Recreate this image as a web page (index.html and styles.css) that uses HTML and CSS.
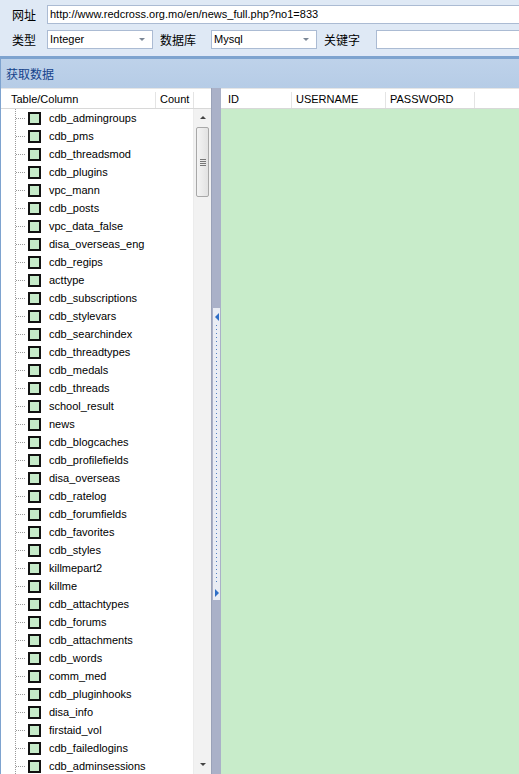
FILE: index.html
```html
<!DOCTYPE html>
<html>
<head>
<meta charset="utf-8">
<link rel="stylesheet" href="styles.css">
</head>
<body>
<div class="app">
  <div class="form">
    <div class="row">
      <span class="label">网址</span>
      <div class="input url">http://www.redcross.org.mo/en/news_full.php?no1=833</div>
    </div>
    <div class="row">
      <span class="label">类型</span>
      <div class="input combo w106">Integer<span class="arrow"></span></div>
      <span class="label l2">数据库</span>
      <div class="input combo w106">Mysql<span class="arrow"></span></div>
      <span class="label l3">关键字</span>
      <div class="input grow"></div>
    </div>
  </div>
  <div class="toolbar"><span class="tbtn">获取数据</span></div>
  <div class="main">
    <div class="left">
      <div class="lhead">
        <div class="hcol c1">Table/Column</div>
        <div class="hcol c2">Count</div>
        <div class="hcol c3"></div>
      </div>
      <div class="lbody">
        <ul class="tree" id="tree"></ul>
        <div class="vscroll">
          <div class="sbtn up"></div>
          <div class="thumb"><span class="grip"></span></div>
          <div class="track"></div>
          <div class="sbtn down"></div>
        </div>
      </div>
    </div>
    <div class="splitter">
      <div class="collapse">
        <span class="tri left-tri"></span>
        <span class="dots"></span>
        <span class="tri right-tri"></span>
      </div>
    </div>
    <div class="right">
      <div class="rhead">
        <div class="rcol r1">ID</div>
        <div class="rcol r2">USERNAME</div>
        <div class="rcol r3">PASSWORD</div>
        <div class="rcol r4"></div>
      </div>
      <div class="grid"></div>
    </div>
  </div>
</div>
<script>
var names = ["cdb_admingroups","cdb_pms","cdb_threadsmod","cdb_plugins","vpc_mann","cdb_posts","vpc_data_false","disa_overseas_eng","cdb_regips","acttype","cdb_subscriptions","cdb_stylevars","cdb_searchindex","cdb_threadtypes","cdb_medals","cdb_threads","school_result","news","cdb_blogcaches","cdb_profilefields","disa_overseas","cdb_ratelog","cdb_forumfields","cdb_favorites","cdb_styles","killmepart2","killme","cdb_attachtypes","cdb_forums","cdb_attachments","cdb_words","comm_med","cdb_pluginhooks","disa_info","firstaid_vol","cdb_failedlogins","cdb_adminsessions"];
var t = document.getElementById('tree');
names.forEach(function(n){
  var li = document.createElement('li');
  li.className = 'node';
  li.innerHTML = '<span class="hline"></span><span class="cb"></span><span class="name">' + n + '</span>';
  t.appendChild(li);
});
</script>
</body>
</html>
```
FILE: styles.css
```css
html, body {
  margin: 0;
  padding: 0;
  width: 519px;
  height: 774px;
  overflow: hidden;
}
body {
  font-family: "Liberation Sans", "DejaVu Sans", "Noto Sans CJK SC", sans-serif;
  font-size: 11px;
  color: #000;
  background: #dfe8f6;
}
.app {
  display: flex;
  flex-direction: column;
  height: 774px;
}
.form {
  background: #dfe9f5;
  padding: 5px 0 0 0;
  height: 52px;
  box-sizing: border-box;
  display: flex;
  flex-direction: column;
  gap: 6px;
}
.row {
  display: flex;
  align-items: center;
  height: 19px;
}
.label {
  font-family: "Noto Sans CJK SC", sans-serif;
  font-size: 12px;
  width: 35px;
  padding-left: 12px;
  box-sizing: content-box;
  line-height: 19px;
}
.label.l2 { width: 51px; padding-left: 7px; }
.label.l3 { width: 52px; padding-left: 7px; }
.input {
  height: 19px;
  box-sizing: border-box;
  background: #fff;
  border: 1px solid #abbbd3;
  line-height: 17px;
  padding-left: 2px;
  position: relative;
}
.input.url { flex: 1; border-right: none; }
.input.w106 { width: 106px; }
.input.grow { flex: 1; border-right: none; }
.arrow {
  position: absolute;
  right: 7px;
  top: 7px;
  width: 0;
  height: 0;
  border-left: 3px solid transparent;
  border-right: 3px solid transparent;
  border-top: 3px solid #7c8796;
}
.toolbar {
  margin-top: 4px;
  height: 32px;
  box-sizing: border-box;
  border-top: 3px solid #7ea3cf;
  background: linear-gradient(#bed2ea, #b6cce6);
  border-left: 1px solid #7ea3cf;
  display: flex;
  align-items: center;
}
.tbtn {
  font-family: "Noto Sans CJK SC", sans-serif;
  font-size: 12px;
  color: #15428b;
  padding-left: 5px;
}
.main {
  flex: 1;
  display: flex;
  min-height: 0;
  background: #c8ccd8;
}
.left {
  width: 212px;
  box-sizing: border-box;
  border-left: 1px solid #7ea3cf;
  border-right: 1px solid #9aa2b8;
  background: #fff;
  display: flex;
  flex-direction: column;
}
.lhead {
  height: 21px;
  box-sizing: border-box;
  display: flex;
  border-top: 1px solid #e6e6e6;
  border-bottom: 1px solid #d8d8d8;
  background: #fff;
  padding-top: 3px;
}
.hcol {
  line-height: 15px;
  border-right: 1px solid #e4e4e4;
  box-sizing: border-box;
}
.c1 { width: 155px; padding-left: 10px; }
.c2 { width: 38px; padding-left: 4px; }
.c3 { flex: 1; border-right: none; }
.lbody {
  flex: 1;
  display: flex;
  min-height: 0;
  background: #fff;
}
.tree {
  list-style: none;
  margin: 0;
  padding: 0;
  flex: 1;
  position: relative;
  overflow: hidden;
  background-image: linear-gradient(#9a9a9a 1px, transparent 1px);
  background-size: 1px 2px;
  background-repeat: repeat-y;
  background-position: 14px 0;
}
.node {
  height: 18px;
  display: flex;
  align-items: center;
  white-space: nowrap;
}
.hline {
  width: 10px;
  margin-left: 15px;
  height: 1px;
  background-image: linear-gradient(90deg, #9a9a9a 1px, transparent 1px);
  background-size: 2px 1px;
}
.cb {
  width: 13px;
  height: 13px;
  box-sizing: border-box;
  border: 2px solid #111;
  background: #c6ebc9;
  margin-left: 2px;
}
.name {
  margin-left: 8px;
  line-height: 18px;
}
.vscroll {
  width: 17px;
  background: #f2f2f2;
  border-left: 1px solid #ececec;
  display: flex;
  flex-direction: column;
  align-items: center;
}
.sbtn {
  height: 18px;
  width: 16px;
  position: relative;
}
.sbtn::after {
  content: "";
  position: absolute;
  left: 5px;
  width: 0;
  height: 0;
  border-left: 3px solid transparent;
  border-right: 3px solid transparent;
}
.sbtn.up::after { top: 7px; border-bottom: 3px solid #444; }
.sbtn.down::after { top: 7px; border-top: 3px solid #444; }
.thumb {
  width: 13px;
  height: 70px;
  box-sizing: border-box;
  border: 1px solid #a8a8a8;
  border-radius: 2px;
  background: linear-gradient(90deg, #f4f4f4, #e2e2e2);
  display: flex;
  align-items: center;
  justify-content: center;
}
.grip {
  width: 6px;
  height: 7px;
  background-image: linear-gradient(#777 1px, transparent 1px);
  background-size: 6px 2px;
}
.track { flex: 1; }
.splitter {
  width: 9px;
  background: #aab1c8;
  display: flex;
  flex-direction: column;
  align-items: center;
  padding-top: 220px;
}
.collapse {
  width: 7px;
  height: 292px;
  background: #eaedf4;
  display: flex;
  flex-direction: column;
  align-items: center;
  padding: 5px 0 3px;
  box-sizing: border-box;
}
.tri {
  width: 0;
  height: 0;
  border-top: 4px solid transparent;
  border-bottom: 4px solid transparent;
}
.left-tri { border-right: 4px solid #2f6fc6; }
.right-tri { border-left: 4px solid #2f6fc6; }
.dots {
  flex: 1;
  width: 1px;
  margin: 4px 0;
  background-image: linear-gradient(#4f7fc2 1px, transparent 1px);
  background-size: 1px 4px;
}
.right {
  flex: 1;
  display: flex;
  flex-direction: column;
  background: #c8ecca;
}
.rhead {
  height: 21px;
  box-sizing: border-box;
  display: flex;
  background: #fff;
  border-top: 1px solid #e6e6e6;
  border-bottom: 1px solid #d8d8d8;
  padding-top: 3px;
}
.rcol {
  line-height: 15px;
  border-right: 1px solid #e4e4e4;
  box-sizing: border-box;
  padding-left: 7px;
}
.r1 { width: 71px; }
.r2 { width: 94px; padding-left: 4px; }
.r3 { width: 89px; padding-left: 4px; }
.r4 { flex: 1; border-right: none; }
.grid { flex: 1; }
```
